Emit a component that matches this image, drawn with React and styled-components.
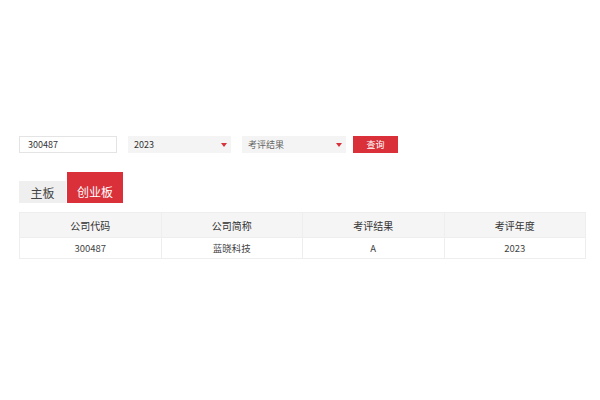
import styled, { createGlobalStyle } from "styled-components";

const GlobalStyle = createGlobalStyle`
  body {
    margin: 0;
    background: #fff;
    font-family: "Noto Sans CJK SC", "Noto Sans", sans-serif;
    color: #333;
  }
`;

const Page = styled.div`
  width: 600px;
  height: 400px;
  padding: 136px 14px 0 19px;
  box-sizing: border-box;
`;

const Filters = styled.div`
  display: flex;
  align-items: center;
  height: 17px;
`;

const TextInput = styled.input`
  box-sizing: border-box;
  width: 98px;
  height: 17px;
  border: 1px solid #e4e4e4;
  padding: 0 8px;
  font-family: inherit;
  font-size: 9px;
  color: #333;
  outline: none;
  margin-right: 11px;
`;

const Select = styled.div`
  box-sizing: border-box;
  width: ${(p) => p.$width}px;
  height: 17px;
  background: #f4f4f4;
  display: flex;
  align-items: center;
  justify-content: space-between;
  padding: 0 4px 0 6px;
  font-size: 9px;
  color: ${(p) => (p.$muted ? "#666" : "#333")};
  margin-right: ${(p) => p.$gap}px;
`;

const Caret = styled.span`
  width: 0;
  height: 0;
  border-left: 3.5px solid transparent;
  border-right: 3.5px solid transparent;
  border-top: 4px solid #d9303a;
`;

const Button = styled.button`
  box-sizing: border-box;
  width: 45px;
  height: 17px;
  border: none;
  background: #d9303a;
  color: #fff;
  font-family: inherit;
  font-size: 9px;
  padding: 0;
`;

const Tabs = styled.div`
  display: flex;
  align-items: flex-end;
  margin-top: 19px;
`;

const Tab = styled.div`
  box-sizing: border-box;
  display: flex;
  align-items: center;
  justify-content: center;
  width: ${(p) => (p.$active ? 56 : 47)}px;
  height: ${(p) => (p.$active ? 31 : 22)}px;
  margin-left: ${(p) => (p.$active ? 1 : 0)}px;
  padding-top: ${(p) => (p.$active ? 8 : 0)}px;
  background: ${(p) => (p.$active ? "#d9303a" : "#efefef")};
  color: ${(p) => (p.$active ? "#fff" : "#444")};
  font-size: 12px;
`;

const Table = styled.table`
  margin-top: 9px;
  width: 567px;
  border-collapse: collapse;
  table-layout: fixed;
  font-size: 9.5px;
`;

const Th = styled.th`
  height: 24px;
  background: #f5f5f5;
  border: 1px solid #eee;
  font-weight: 400;
  color: #333;
  font-size: 10px;
  padding: 0;
`;

const Td = styled.td`
  height: 20px;
  border: 1px solid #eee;
  text-align: center;
  color: #444;
  padding: 0;
`;

const columns = ["公司代码", "公司简称", "考评结果", "考评年度"];
const rows = [["300487", "蓝晓科技", "A", "2023"]];

export default function App() {
  return (
    <>
      <GlobalStyle />
      <Page>
        <Filters>
          <TextInput defaultValue="300487" />
          <Select $width={103} $gap={11}>
            <span>2023</span>
            <Caret />
          </Select>
          <Select $width={104} $gap={7} $muted>
            <span>考评结果</span>
            <Caret />
          </Select>
          <Button>查询</Button>
        </Filters>
        <Tabs>
          <Tab>主板</Tab>
          <Tab $active>创业板</Tab>
        </Tabs>
        <Table>
          <thead>
            <tr>
              {columns.map((c) => (
                <Th key={c}>{c}</Th>
              ))}
            </tr>
          </thead>
          <tbody>
            {rows.map((r) => (
              <tr key={r[0]}>
                {r.map((v, i) => (
                  <Td key={i}>{v}</Td>
                ))}
              </tr>
            ))}
          </tbody>
        </Table>
      </Page>
    </>
  );
}
